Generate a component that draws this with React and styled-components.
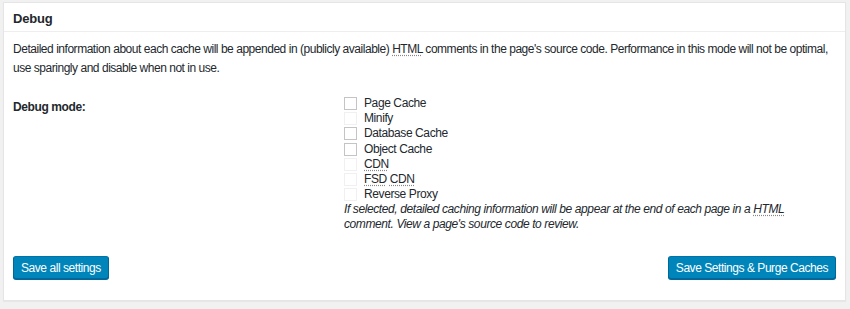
import React from 'react'
import styled, { createGlobalStyle } from 'styled-components'

const Global = createGlobalStyle`
  html, body { margin: 0; padding: 0; background: #f1f1f1; }
  body {
    font-family: "Liberation Sans", Arial, sans-serif;
    font-size: 12px;
    letter-spacing: -0.4px;
    color: #23282d;
  }
`

const Page = styled.div`
  padding: 2px 4px 6px 3px;
`

const Panel = styled.div`
  background: #fff;
  border: 1px solid #e5e5e5;
  box-shadow: 0 1px 1px rgba(0, 0, 0, 0.04);
  height: 299px;
  box-sizing: border-box;
`

const Header = styled.h3`
  margin: 0;
  height: 29px;
  box-sizing: border-box;
  padding: 8px 9px 0;
  font-size: 13px;
  font-weight: 700;
  letter-spacing: -0.2px;
  border-bottom: 1px solid #eee;
`

const Body = styled.div`
  padding: 8px 9px 0;
`

const Desc = styled.p`
  margin: 0 0 18px;
  line-height: 19px;
  letter-spacing: -0.47px;
`

const Abbr = styled.abbr`
  text-decoration: underline dotted #888;
  text-underline-offset: 2px;
  cursor: help;
`

const Row = styled.div`
  display: grid;
  grid-template-columns: 331px 1fr;
  margin-top: 9px;
`

const Label = styled.div`
  font-weight: 700;
  padding-top: 4px;
`

const Options = styled.div`
  display: flex;
  flex-direction: column;
`

const Option = styled.label`
  display: flex;
  align-items: center;
  gap: 7px;
  height: 15.2px;
  line-height: 15px;
`

const Box = styled.span`
  width: 13px;
  height: 13px;
  box-sizing: border-box;
  border: 1px solid ${(p) => (p.disabled ? '#f0f0f0' : '#c4c4c4')};
  background: #fff;
  flex: none;
`

const Note = styled.p`
  margin: 0;
  font-style: italic;
  line-height: 15px;
`

const Actions = styled.div`
  display: flex;
  justify-content: space-between;
  margin-top: 24px;
`

const Button = styled.button`
  font-family: inherit;
  font-size: 12px;
  letter-spacing: -0.45px;
  color: #fff;
  background: #0085ba;
  border: 1px solid;
  border-color: #0073aa #006799 #006799;
  border-radius: 3px;
  box-shadow: 0 1px 0 #006799;
  height: 23px;
  padding: 0 7px;
  line-height: 20px;
  cursor: pointer;
`

const options = [
  { label: 'Page Cache' },
  { label: 'Minify', disabled: true },
  { label: 'Database Cache' },
  { label: 'Object Cache' },
  { label: <Abbr>CDN</Abbr>, disabled: true },
  { label: <><Abbr>FSD</Abbr> <Abbr>CDN</Abbr></>, disabled: true },
  { label: 'Reverse Proxy', disabled: true },
]

export default function App() {
  return (
    <>
      <Global />
      <Page>
        <Panel>
          <Header>Debug</Header>
          <Body>
            <Desc>
              Detailed information about each cache will be appended in (publicly available) <Abbr>HTML</Abbr> comments in the page's source code. Performance in this mode will not be optimal, use sparingly and disable when not in use.
            </Desc>
            <Row>
              <Label>Debug mode:</Label>
              <div>
                <Options>
                  {options.map((o, i) => (
                    <Option key={i}>
                      <Box disabled={o.disabled} />
                      <span>{o.label}</span>
                    </Option>
                  ))}
                </Options>
                <Note>
                  If selected, detailed caching information will be appear at the end of each page in a <Abbr>HTML</Abbr><br />
                  comment. View a page's source code to review.
                </Note>
              </div>
            </Row>
            <Actions>
              <Button>Save all settings</Button>
              <Button>Save Settings &amp; Purge Caches</Button>
            </Actions>
          </Body>
        </Panel>
      </Page>
    </>
  )
}
